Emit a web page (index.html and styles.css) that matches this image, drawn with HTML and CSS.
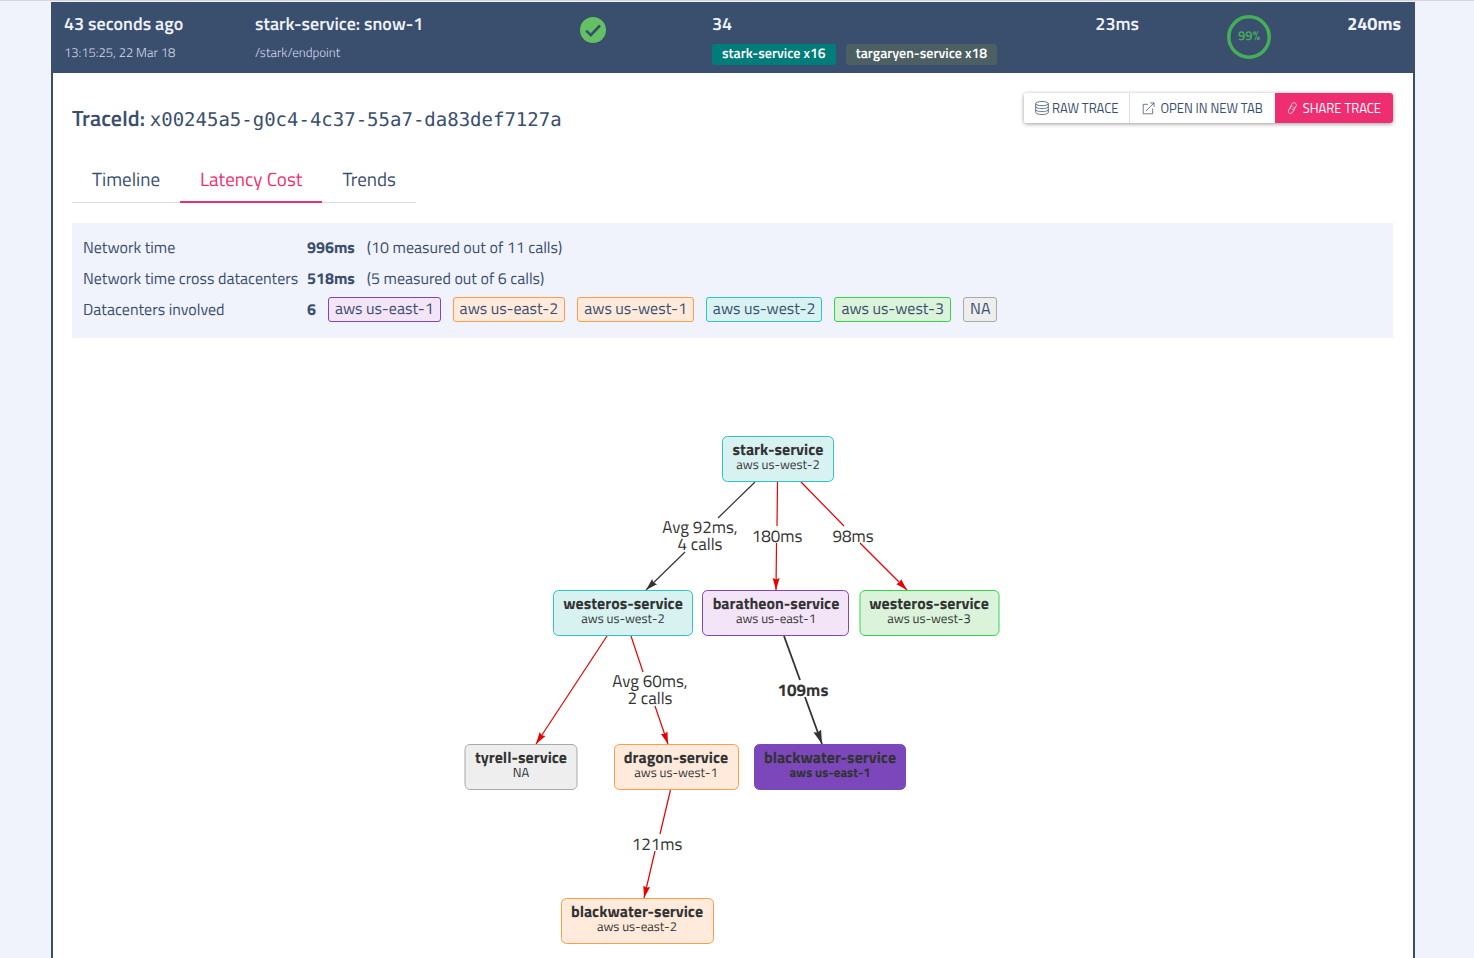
FILE: index.html
```html
<!DOCTYPE html>
<html lang="en">
<head>
<meta charset="utf-8">
<title>Trace details</title>
<link rel="stylesheet" href="styles.css">
</head>
<body>
<main class="trace">
  <header class="summary">
    <div>
      <div class="primary strong">43 seconds ago</div>
      <div class="secondary">13:15:25, 22 Mar 18</div>
    </div>
    <div>
      <div class="primary strong">stark-service: snow-1</div>
      <div class="secondary">/stark/endpoint</div>
    </div>
    <div class="status">
      <svg width="26" height="26" viewBox="0 0 26 26" role="img" aria-label="Success">
        <circle cx="13" cy="13" r="13" fill="#65c063"/>
        <path d="M6.2 13.6l4.6 4.5 9.2-9.6" fill="none" stroke="#3a4e6e" stroke-width="2.6"/>
      </svg>
    </div>
    <div class="spans">
      <div class="primary strong">34</div>
      <div class="badges">
        <span class="badge badge-teal">stark-service x16</span>
        <span class="badge badge-slate">targaryen-service x18</span>
      </div>
    </div>
    <div class="duration primary strong">23ms</div>
    <div class="ratio">
      <svg class="ring" width="44" height="44" viewBox="0 0 44 44">
        <circle cx="22" cy="22" r="20.2" fill="none" stroke="#45ae58" stroke-width="3.5"/>
        <text x="22" y="25">99%</text>
      </svg>
    </div>
    <div class="total primary">240ms</div>
  </header>

  <section class="details">
    <div class="title-row">
      <h1 class="trace-title">TraceId: <span class="trace-id">x00245a5-g0c4-4c37-55a7-da83def7127a</span></h1>
      <div class="actions">
        <button class="action action-raw" type="button">
          <svg width="14" height="14" viewBox="0 0 14 14" class="icon">
            <ellipse cx="7" cy="2.6" rx="6.3" ry="2.1"/>
            <path d="M.7 2.6v8.8c0 1.2 2.8 2.1 6.3 2.1s6.3-.9 6.3-2.1V2.6M.7 5.5c0 1.2 2.8 2.1 6.3 2.1s6.3-.9 6.3-2.1M.7 8.5c0 1.2 2.8 2.1 6.3 2.1s6.3-.9 6.3-2.1"/>
          </svg>
          <span>RAW TRACE</span>
        </button>
        <button class="action action-open" type="button">
          <svg width="13" height="13" viewBox="0 0 14 14" class="icon">
            <path d="M6.5 2.5H1.3v10.2h10.2V7M4.2 9.8L13 1M8.8 1H13v4.3"/>
          </svg>
          <span>OPEN IN NEW TAB</span>
        </button>
        <button class="action action-share" type="button">
          <svg width="11" height="13" viewBox="0 0 12 14" class="icon">
            <path d="M4.2 7.4C3.4 6.5 3.4 5.4 4 4.4l1.5-2.5C6.3.7 7.8.3 9 1s1.5 2.3.8 3.5L8.3 7C7.7 8 6.6 8.4 5.6 8.1M7.3 5.5c.9.9 1 2 .4 3.1l-1.5 2.5c-.8 1.3-2.3 1.7-3.5 1S1.2 9.8 1.9 8.6L3.4 6.1c.6-1 1.6-1.4 2.6-1.2"/>
          </svg>
          <span>SHARE TRACE</span>
        </button>
      </div>
    </div>

    <nav class="tabs">
      <a class="tab" href="#timeline">Timeline</a>
      <a class="tab tab-active" href="#latency" aria-current="page">Latency Cost</a>
      <a class="tab" href="#trends">Trends</a>
    </nav>

    <dl class="stats">
      <dt>Network time</dt>
      <dd><b>996ms</b><span>(10 measured out of 11 calls)</span></dd>
      <dt>Network time cross datacenters</dt>
      <dd><b>518ms</b><span>(5 measured out of 6 calls)</span></dd>
      <dt>Datacenters involved</dt>
      <dd><b>6</b>
        <span class="chip purple">aws us-east-1</span>
        <span class="chip orange">aws us-east-2</span>
        <span class="chip orange">aws us-west-1</span>
        <span class="chip cyan">aws us-west-2</span>
        <span class="chip green">aws us-west-3</span>
        <span class="chip gray">NA</span>
      </dd>
    </dl>

    <svg class="graph" width="537" height="510" viewBox="0 0 537 510" role="img" aria-label="Service latency graph">
      <defs>
        <marker id="arrow-red" viewBox="0 0 12 8" refX="12" refY="4" markerWidth="12" markerHeight="8" markerUnits="userSpaceOnUse" orient="auto"><path d="M0 .5L12 4 0 7.5 1.5 4z" fill="#e60000"/></marker>
        <marker id="arrow-dark" viewBox="0 0 12 8" refX="12" refY="4" markerWidth="12" markerHeight="8" markerUnits="userSpaceOnUse" orient="auto"><path d="M0 .5L12 4 0 7.5 1.5 4z" fill="#333"/></marker>
        <marker id="arrow-bold" viewBox="0 0 12 8" refX="12" refY="4" markerWidth="14" markerHeight="10" markerUnits="userSpaceOnUse" orient="auto"><path d="M0 .5L12 4 0 7.5 1.5 4z" fill="#333"/></marker>
      </defs>
      <g class="edge">
        <path d="M291 47L254 83"/><path d="M221 117L182 155" marker-end="url(#arrow-dark)"/>
      </g>
      <g class="edge edge-red">
        <path d="M313.5 47L313 91"/><path d="M312.5 108L312 155" marker-end="url(#arrow-red)"/>
        <path d="M337 47L380 91"/><path d="M396 108L443 155" marker-end="url(#arrow-red)"/>
        <path d="M143 201L72 309" marker-end="url(#arrow-red)"/>
        <path d="M167 201L179 237"/><path d="M191 271L204 309" marker-end="url(#arrow-red)"/>
        <path d="M206.5 355L196 399"/><path d="M191 416L180 463" marker-end="url(#arrow-red)"/>
      </g>
      <g class="edge edge-bold">
        <path d="M320 201L336 245"/><path d="M341 262L358 309" marker-end="url(#arrow-bold)"/>
      </g>
      <g class="edge-label">
        <text x="236" y="98">Avg 92ms,</text><text x="236" y="115">4 calls</text>
        <text x="313" y="107">180ms</text>
        <text x="389" y="107">98ms</text>
        <text x="186" y="252">Avg 60ms,</text><text x="186" y="269">2 calls</text>
        <text class="heavy" x="339" y="261">109ms</text>
        <text x="193" y="415">121ms</text>
      </g>
      <g class="node cyan"><rect x="258.5" y="1.5" width="111" height="45" rx="5"/><text class="name" x="314" y="20">stark-service</text><text class="zone" x="314" y="34">aws us-west-2</text></g>
      <g class="node cyan"><rect x="89.5" y="155.5" width="139" height="45" rx="5"/><text class="name" x="159" y="174">westeros-service</text><text class="zone" x="159" y="188">aws us-west-2</text></g>
      <g class="node purple"><rect x="238.5" y="155.5" width="146" height="45" rx="5"/><text class="name" x="312" y="174">baratheon-service</text><text class="zone" x="312" y="188">aws us-east-1</text></g>
      <g class="node green"><rect x="396" y="155.5" width="139" height="45" rx="5"/><text class="name" x="465" y="174">westeros-service</text><text class="zone" x="465" y="188">aws us-west-3</text></g>
      <g class="node gray"><rect x="1" y="309.5" width="112" height="45" rx="5"/><text class="name" x="57" y="328">tyrell-service</text><text class="zone" x="57" y="342">NA</text></g>
      <g class="node orange"><rect x="150.5" y="309.5" width="124" height="45" rx="5"/><text class="name" x="212" y="328">dragon-service</text><text class="zone" x="212" y="342">aws us-west-1</text></g>
      <g class="node selected"><rect x="290.5" y="309.5" width="151" height="45" rx="5"/><text class="name" x="366" y="328">blackwater-service</text><text class="zone heavy" x="366" y="342">aws us-east-1</text></g>
      <g class="node orange"><rect x="97.5" y="463.5" width="152" height="45" rx="5"/><text class="name" x="173" y="482">blackwater-service</text><text class="zone" x="173" y="496">aws us-east-2</text></g>
    </svg>
  </section>
</main>
</body>
</html>
```
FILE: styles.css
```css
* { box-sizing: border-box; }

body {
  margin: 0;
  min-height: 100vh;
  background: #f0f3fc;
  border-top: 1px solid #d5d5d8;
  color: #3a4e6e;
  font-family: "Titillium Web", Roboto, sans-serif;
  font-size: 16px;
  line-height: 20px;
  text-rendering: geometricPrecision;
}

.trace {
  margin: 1px 59px 0 51px;
  min-height: calc(100vh - 2px);
  background: #fff;
  border: 2px solid #3a4e6e;
  border-width: 0 2px;
}

.summary {
  display: grid;
  grid-template-columns: 191fr 238fr 200fr 351fr 115fr 180fr 62fr;
  min-height: 71px;
  padding: 12px 12px 6px 11px;
  background: #3a4e6e;
  color: #f0f3fc;
}

.summary > div { min-width: 0; white-space: nowrap; }
.primary { font-size: 18px; }
.strong { font-weight: 600; }
.secondary { margin-top: 9px; color: #d3daea; font-size: 13px; font-weight: 300; }
.status { padding-top: 3px; text-align: center; }
.spans { padding-left: 19px; }
.badges { display: flex; gap: 10px; margin-top: 10px; }

.badge {
  padding: 0 10px 2px;
  border-radius: 3px;
  color: #fff;
  font-size: 14px;
  font-weight: 600;
  line-height: 19px;
}

.badge-teal { background: #007d7a; }
.badge-slate { background: #4c6064; }
.duration { padding-right: 20px; text-align: right; }
.ratio { display: flex; justify-content: center; align-items: flex-start; padding-top: 1px; }
.ring text { fill: #45ae58; font-size: 13px; font-weight: 600; text-anchor: middle; }
.total { font-weight: 700; text-align: right; }

.details { padding: 20px 20px 0 19px; }
.title-row { display: flex; justify-content: space-between; align-items: flex-start; }
.trace-title { margin: 11px 0 0; font-size: 22px; font-weight: 600; line-height: 28px; }
.trace-id { font-family: "DejaVu Sans Mono", monospace; font-size: 19px; font-weight: 400; }

.actions {
  display: flex;
  border-radius: 3px;
  box-shadow: 0 1px 4px rgba(0, 0, 0, .4);
}

.action {
  display: flex;
  align-items: center;
  gap: 5px;
  height: 30px;
  padding: 0 12px;
  border: 0;
  border-radius: 3px 0 0 3px;
  background: #fff;
  color: #3a4e6e;
  font: 400 13px/20px "Titillium Web", Roboto, sans-serif;
}

.action-raw { gap: 3px; padding: 0 11px; }
.action-open { border-left: 1px solid #dcdde0; border-radius: 0; }
.action-share { border-radius: 0 3px 3px 0; background: #ee2e71; color: #fff; }
.icon { fill: none; stroke: currentColor; stroke-width: .8; }

.tabs {
  display: flex;
  width: max-content;
  margin-top: 24px;
  border-bottom: 1px solid #dcdcdc;
}

.tab {
  margin-bottom: -1px;
  padding: 10px 20px 9px;
  border-bottom: 2px solid transparent;
  color: #3a4e6e;
  font-size: 19px;
  line-height: 24px;
  text-decoration: none;
}

.tab-active { border-color: #ee2e71; color: #ee2e71; }

.stats {
  display: grid;
  grid-template-columns: 216px 1fr;
  grid-auto-rows: 25px;
  gap: 6px 8px;
  align-items: center;
  margin: 20px 0 0;
  padding: 12px 12px 16px 11px;
  background: #f0f3fc;
}

.stats dd { display: flex; gap: 12px; align-items: center; margin: 0; }

.chip {
  padding: 0 6px;
  border: 1px solid;
  border-radius: 3px;
  line-height: 23px;
}

.chip.purple { background: #f3e4f7; border-color: #7b47bb; }
.chip.orange { background: #ffeadb; border-color: #ff9c47; }
.chip.cyan { background: #d8f2f2; border-color: #2ec4c4; }
.chip.green { background: #daf3da; border-color: #32d64a; }
.chip.gray { background: #eee; border-color: #a9a9a9; }

.graph { display: block; margin: 97px auto 12px; }
.graph text { fill: #333; text-anchor: middle; }
.edge { fill: none; stroke: #333; stroke-width: 1.2; }
.edge-red { stroke: #e60000; }
.edge-bold { stroke-width: 1.8; }
.edge-label { font-size: 17px; }
.heavy { font-weight: 700; }
.name { font-size: 16px; font-weight: 700; }
.zone { font-size: 13px; }
.node.purple { fill: #f3e4f7; stroke: #7b47bb; }
.node.orange { fill: #ffeadb; stroke: #ff9c47; }
.node.cyan { fill: #d8f2f2; stroke: #2ec4c4; }
.node.green { fill: #daf3da; stroke: #32d64a; }
.node.gray { fill: #eee; stroke: #a9a9a9; }
.node.selected { fill: #7b47bb; stroke: #7b47bb; }
.node text { stroke: none; }
```
